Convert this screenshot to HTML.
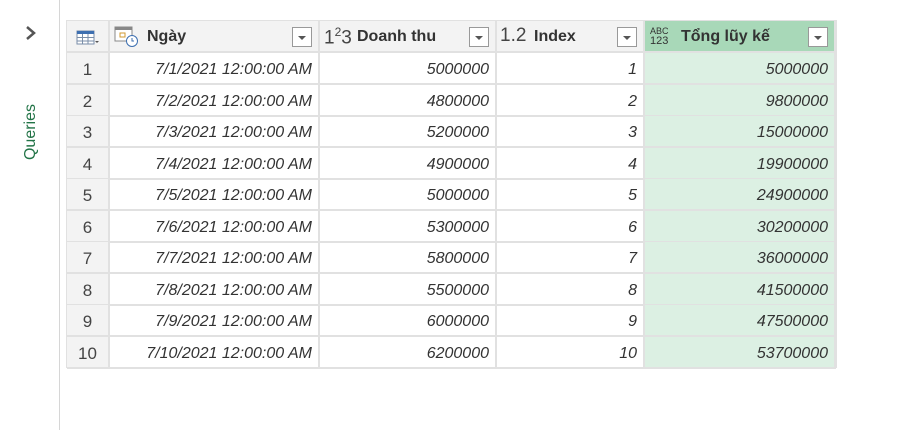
<!DOCTYPE html>
<html><head><meta charset="utf-8"><style>
body{margin:0;width:923px;height:430px;background:#fff;position:relative;overflow:hidden;font-family:"Segoe UI","Liberation Sans","DejaVu Sans",sans-serif;}
.side{position:absolute;left:59px;top:0;width:1px;height:430px;background:#d6d6d6;}
.q{position:absolute;left:0px;top:123px;transform:rotate(-90deg);transform-origin:center;color:#217346;font-size:16px;width:62px;text-align:center;}
.c{position:absolute;box-sizing:border-box;border-right:2px solid #e1e1e1;border-bottom:2px solid #e1e1e1;font-size:16px;color:#333;font-style:italic;text-align:right;padding-right:6px;line-height:34px;}
.h{position:absolute;box-sizing:border-box;background:#f3f3f3;border-right:2px solid #e1e1e1;border-bottom:2px solid #e1e1e1;font-size:16px;font-weight:bold;color:#333;}
.rn{background:#f3f3f3;font-style:normal;text-align:center;padding:0;color:#444;font-size:17px;}
.g{background:#dcf0e3;}
.dd{position:absolute;right:6px;top:6px;width:20px;height:20px;border:1px solid #999;background:#fff;box-sizing:border-box;}
.dd:after{content:"";position:absolute;left:5px;top:8px;border-left:4px solid transparent;border-right:4px solid transparent;border-top:4px solid #555;}
</style></head><body>
<div class="side"></div>
<svg style="position:absolute;left:24px;top:25px" width="14" height="16"><path d="M3 2 L10 8 L3 14" stroke="#555" stroke-width="2.5" fill="none"/></svg>
<div class="q">Queries</div>
<div style="position:absolute;left:66px;top:20px;width:771px;height:348px;border:1px solid #e1e1e1;box-sizing:border-box"></div>
<div class="h" style="left:67px;top:21px;width:43px;height:32px">
<svg style="position:absolute;left:9px;top:9px" width="24" height="16"><rect x="1" y="1" width="17" height="13" fill="#fff" stroke="#7a8ea8"/><rect x="1" y="1" width="17" height="3" fill="#3d6fb0"/><path d="M1 7.5H18M1 11H18M6.5 4V14M12 4V14" stroke="#7a8ea8"/><path d="M19 11l2 2 2-2z" fill="#555"/></svg></div>
<div class="h" style="left:110px;top:21px;width:210px;height:32px">
<svg style="position:absolute;left:4px;top:5px" width="26" height="22"><rect x="1" y="1" width="17" height="14" fill="#fff" stroke="#888"/><rect x="1" y="1" width="17" height="3" fill="#888"/><rect x="6" y="7" width="5" height="4" fill="none" stroke="#d09a30"/><circle cx="18" cy="15" r="5.5" fill="#fff" stroke="#3d6fb0"/><path d="M18 12v3h2" stroke="#3d6fb0" fill="none"/></svg>
<span style="position:absolute;left:37px;top:7px">Ngày</span><div class="dd"></div></div>
<div class="h" style="left:320px;top:21px;width:177px;height:32px">
<span style="position:absolute;left:4px;top:4px;font-weight:normal;font-size:19px;color:#444">1<sup style="font-size:12px">2</sup>3</span>
<span style="position:absolute;left:37px;top:7px">Doanh thu</span><div class="dd"></div></div>
<div class="h" style="left:497px;top:21px;width:148px;height:32px">
<span style="position:absolute;left:3px;top:4px;font-weight:normal;font-size:19px;color:#444">1.2</span>
<span style="position:absolute;left:37px;top:7px">Index</span><div class="dd"></div></div>
<div class="h" style="left:645px;top:21px;width:191px;height:32px;background:#a8d8b8">
<span style="position:absolute;left:5px;top:5px;font-weight:normal;font-size:9px;line-height:10px;color:#333">ABC<br><span style="font-size:11px">123</span></span>
<span style="position:absolute;left:36px;top:7px">Tổng lũy kế</span><div class="dd"></div></div>
<div id="rows"></div>
<script>
var d=[["7/1/2021 12:00:00 AM",5000000,5000000],["7/2/2021 12:00:00 AM",4800000,9800000],["7/3/2021 12:00:00 AM",5200000,15000000],["7/4/2021 12:00:00 AM",4900000,19900000],["7/5/2021 12:00:00 AM",5000000,24900000],["7/6/2021 12:00:00 AM",5300000,30200000],["7/7/2021 12:00:00 AM",5800000,36000000],["7/8/2021 12:00:00 AM",5500000,41500000],["7/9/2021 12:00:00 AM",6000000,47500000],["7/10/2021 12:00:00 AM",6200000,53700000]];
var h="";
for(var i=0;i<10;i++){var t=53+i*31.5;
h+='<div class="c rn" style="left:67px;top:'+t+'px;width:43px;height:32px">'+(i+1)+'</div>';
h+='<div class="c" style="left:110px;top:'+t+'px;width:210px;height:32px">'+d[i][0]+'</div>';
h+='<div class="c" style="left:320px;top:'+t+'px;width:177px;height:32px">'+d[i][1]+'</div>';
h+='<div class="c" style="left:497px;top:'+t+'px;width:148px;height:32px">'+(i+1)+'</div>';
h+='<div class="c g" style="left:645px;top:'+t+'px;width:191px;height:32px">'+d[i][2]+'</div>';}
document.getElementById("rows").innerHTML=h;
</script>
</body></html>
